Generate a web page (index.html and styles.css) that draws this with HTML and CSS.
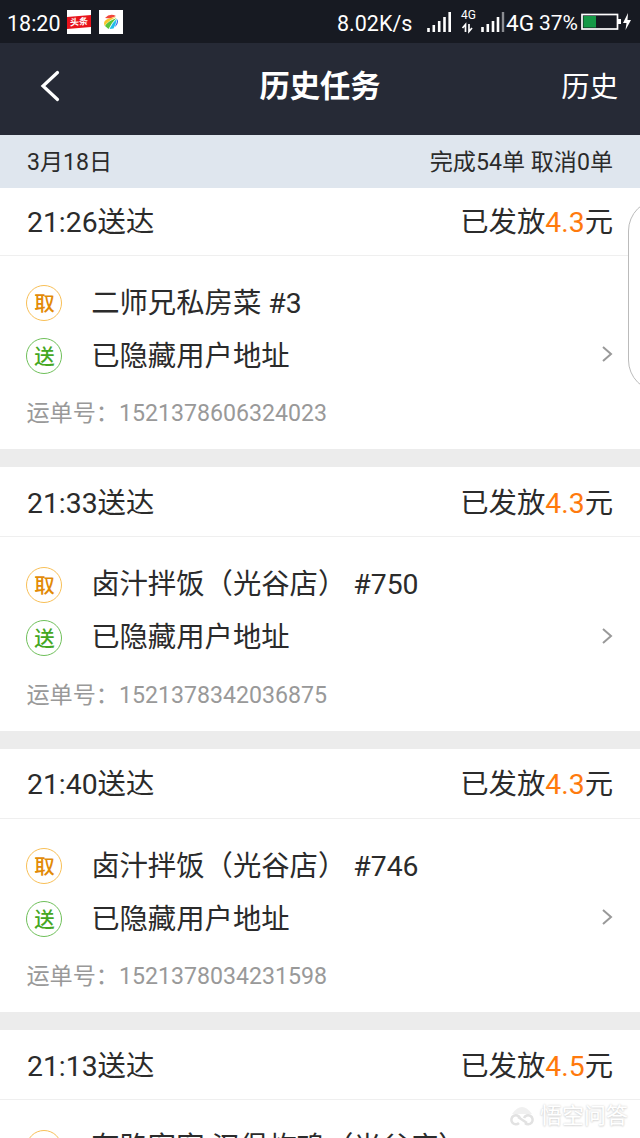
FILE: index.html
```html
<!DOCTYPE html>
<html lang="zh-CN">
<head>
    <meta charset="UTF-8">
    <meta name="viewport" content="width=device-width, initial-scale=1.0">
    <title>历史任务</title>
    <link rel="stylesheet" href="styles.css">
</head>
<body>
    <div class="statusbar">
        <span class="clock">18:20</span>
        <span class="app-icon toutiao"><b>头条</b></span>
        <svg class="app-icon" viewBox="0 0 24 24">
            <rect width="24" height="24" fill="#fff"/>
            <path d="M6 8Q11 2.500 17 6L11 8.500Z" fill="#f0453a"/>
            <path d="M5 13Q5 8.500 17 7Q9 11 5.500 16Z" fill="#f8c62c"/>
            <path d="M6 16Q9 11 17.500 8Q13 12 9.500 19Z" fill="#58c43b"/>
            <path d="M10.500 19Q13 13 18 8.500Q17 14 14.500 18.500Z" fill="#20bdea"/>
            <path d="M15.500 17.500Q18 13 18.500 9Q20.500 13.500 15.500 17.500Z" fill="#3068e8"/>
        </svg>
        <span class="speed">8.02K/s</span>
        <svg class="signals" width="78" height="24" viewBox="0 0 78 24">
            <path d="M1.5 22v-4M6.8 22v-7M12.2 22V11M17.5 22V7M22.7 22V2M55.500 22v-5M60.8 22v-8M66 22V11M71 22V7" stroke="#fff" stroke-width="2.6"/>
            <path d="M76 22V2" stroke="#8b8d92" stroke-width="2.4"/>
            <text x="34" y="9" class="tiny">4G</text>
            <path d="M38.5 22V14.500l-3 3.500M42 14v7.500l3-3.500" fill="none" stroke="#fff" stroke-width="1.700"/>
        </svg>
        <span class="net">4G</span>
        <span class="percent">37%</span>
        <svg class="battery" width="51" height="18" viewBox="0 0 51 18">
            <rect x="1" y="1.500" width="35.500" height="14.500" fill="none" stroke="#fff" stroke-width="1.700"/>
            <rect x="2.500" y="3" width="12.500" height="11.500" fill="#159947"/>
            <path d="M37 6h3v5h-3z" fill="#fff"/>
            <path d="M47 0l-5 10h3.500L44.500 17l5.500-10h-3.500z" fill="#fff"/>
        </svg>
    </div>

    <div class="navbar">
        <svg class="back" width="20" height="34" viewBox="0 0 20 34">
            <path d="M17.500 3.500L3 17l14.500 13.500" fill="none" stroke="#fff" stroke-width="3.200" stroke-linecap="round"/>
        </svg>
        <h1>历史任务</h1>
        <a class="history">历史</a>
    </div>

    <div class="datebar">
        <span>3月18日</span>
        <span>完成54单 取消0单</span>
    </div>

    <div class="list">
        <div class="card">
            <div class="card-head"><span>21:26送达</span><span>已发放<em>4.3</em>元</span></div>
            <div class="card-body">
                <div class="row"><i class="tag pick">取</i><span>二师兄私房菜 #3</span></div>
                <div class="row"><i class="tag send">送</i><span>已隐藏用户地址</span>
                    <svg class="arrow" width="12" height="18" viewBox="0 0 12 18"><path d="M2 2l8 7-8 7"/></svg>
                </div>
                <div class="number">运单号：1521378606324023</div>
            </div>
        </div>

        <div class="card">
            <div class="card-head"><span>21:33送达</span><span>已发放<em>4.3</em>元</span></div>
            <div class="card-body">
                <div class="row"><i class="tag pick">取</i><span>卤汁拌饭（光谷店） #750</span></div>
                <div class="row"><i class="tag send">送</i><span>已隐藏用户地址</span>
                    <svg class="arrow" width="12" height="18" viewBox="0 0 12 18"><path d="M2 2l8 7-8 7"/></svg>
                </div>
                <div class="number">运单号：1521378342036875</div>
            </div>
        </div>

        <div class="card">
            <div class="card-head"><span>21:40送达</span><span>已发放<em>4.3</em>元</span></div>
            <div class="card-body">
                <div class="row"><i class="tag pick">取</i><span>卤汁拌饭（光谷店） #746</span></div>
                <div class="row"><i class="tag send">送</i><span>已隐藏用户地址</span>
                    <svg class="arrow" width="12" height="18" viewBox="0 0 12 18"><path d="M2 2l8 7-8 7"/></svg>
                </div>
                <div class="number">运单号：1521378034231598</div>
            </div>
        </div>

        <div class="card">
            <div class="card-head"><span>21:13送达</span><span>已发放<em>4.5</em>元</span></div>
            <div class="card-body">
                <div class="row"><i class="tag pick">取</i><span>有路客客 汉堡炸鸡（光谷店）</span></div>
            </div>
        </div>
    </div>

    <!-- panel handle on the right edge -->
    <div class="side">
        <div class="side-handle"></div>
    </div>

    <div class="watermark">
        <svg width="28" height="24" viewBox="0 0 28 24">
            <path d="M4 10Q14-4 24 10" fill="#f0f0f0"/>
            <path d="M12 14a4.500 4.500 0 1 0-1 5M10 13l9 6M16 14a4.500 4.500 0 1 1 1 5" fill="none" stroke="#e2e2e2" stroke-width="2.500"/>
        </svg>
        <span>悟空问答</span>
    </div>
</body>
</html>
```

FILE: styles.css
```css
* {
    box-sizing: border-box;
}
body {
    margin: 0;
    height: 1138px;
    overflow: hidden;
    position: relative;
    display: flex;
    flex-direction: column;
    font-family: Roboto, "Noto Sans CJK SC", sans-serif;
    font-size: 28.35px;
    color: #2b2b2b;
    background: #ececec;
}
.statusbar {
    flex: none;
    height: 43px;
    display: flex;
    align-items: center;
    padding: 2px 7px 0;
    background: #171a22;
    color: #fff;
    font-size: 21.5px;
    white-space: nowrap;
}
.statusbar span {
    padding-top: 1px;
}
.clock {
    width: 60px;
}
.app-icon {
    flex: none;
    width: 24px;
    height: 24px;
    margin: -2px 8px 0 0;
}
.toutiao {
    display: flex;
    align-items: center;
    background: #fff;
}
.toutiao b {
    width: 24px;
    height: 12px;
    background: #e8131b;
    font-size: 9px;
    line-height: 12px;
    text-align: center;
    transform: skewY(-5deg);
}
.speed {
    margin-left: 206px;
    width: 90px;
}
.signals {
    flex: none;
    margin-top: -2px;
}
.tiny {
    font-size: 12px;
    fill: #fff;
}
.net {
    margin-left: 1px;
    width: 33px;
    font-size: 22.5px;
}
.percent {
    width: 42px;
    font-size: 21px;
}
.battery {
    flex: none;
    margin-top: -1px;
}

.navbar {
    flex: none;
    height: 92px;
    display: grid;
    grid-template-columns: 1fr auto 1fr;
    align-items: center;
    padding: 0 22px 6px 40px;
    background: #262a36;
    color: #fff;
}
.navbar h1 {
    margin: 0 18px 0 0;
    padding-top: 2px;
    font-size: 30.3px;
    line-height: 40px;
    font-weight: bold;
}
.history {
    justify-self: end;
    margin-left: -18px;
    padding-bottom: 4px;
}

.datebar {
    flex: none;
    height: 53px;
    display: flex;
    justify-content: space-between;
    align-items: center;
    padding: 0 27px 3px;
    background: #dfe6ee;
    font-size: 23.1px;
}

.list {
    flex: 1;
    min-height: 0;
    overflow: hidden;
}
.card {
    height: 263.6px;
    margin-bottom: 18px;
    background: #fff;
}
.card:first-child {
    height: 261px;
}
.card-head {
    height: 70px;
    display: flex;
    justify-content: space-between;
    align-items: center;
    padding: 0 27px 3px;
    border-bottom: 1px solid #efefef;
}
.card:first-child .card-head {
    height: 67.5px;
    padding-bottom: 4px;
}
.card-head em {
    font-style: normal;
    color: #ff7a0d;
}
.card-body {
    padding: 21px 27px 0 26.4px;
}
.row {
    height: 53px;
    display: flex;
    align-items: center;
    white-space: nowrap;
}
.row span {
    padding-bottom: 6px;
}
.tag {
    flex: none;
    width: 36px;
    height: 36px;
    margin-right: 28.8px;
    border: 1.5px solid;
    border-radius: 50%;
    font-size: 20.5px;
    line-height: 36px;
    font-style: normal;
    font-weight: 500;
    text-align: center;
}
.pick {
    border-color: #f8bf57;
    color: #e28a06;
}
.send {
    border-color: #6fc05a;
    color: #45a722;
}
.arrow {
    margin: 0 0 4px auto;
    fill: none;
    stroke: #999;
    stroke-width: 2;
}
.number {
    margin-top: 14.5px;
    font-size: 23.15px;
    line-height: 34px;
    color: #999;
}

.side {
    position: absolute;
    top: 199px;
    right: 0;
    width: 12px;
    height: 193px;
    overflow: hidden;
}
.side-handle {
    width: 64px;
    height: 193px;
    border: 1.5px solid #bbb;
    border-radius: 32px;
    background: #fff;
}
.watermark {
    position: absolute;
    right: 12px;
    bottom: 8px;
    display: flex;
    align-items: center;
    gap: 4px;
    font-size: 22px;
    line-height: 28px;
    color: #fff;
    text-shadow: 0 0 2px #ccc, 0 1px 2px #ddd;
}
```
